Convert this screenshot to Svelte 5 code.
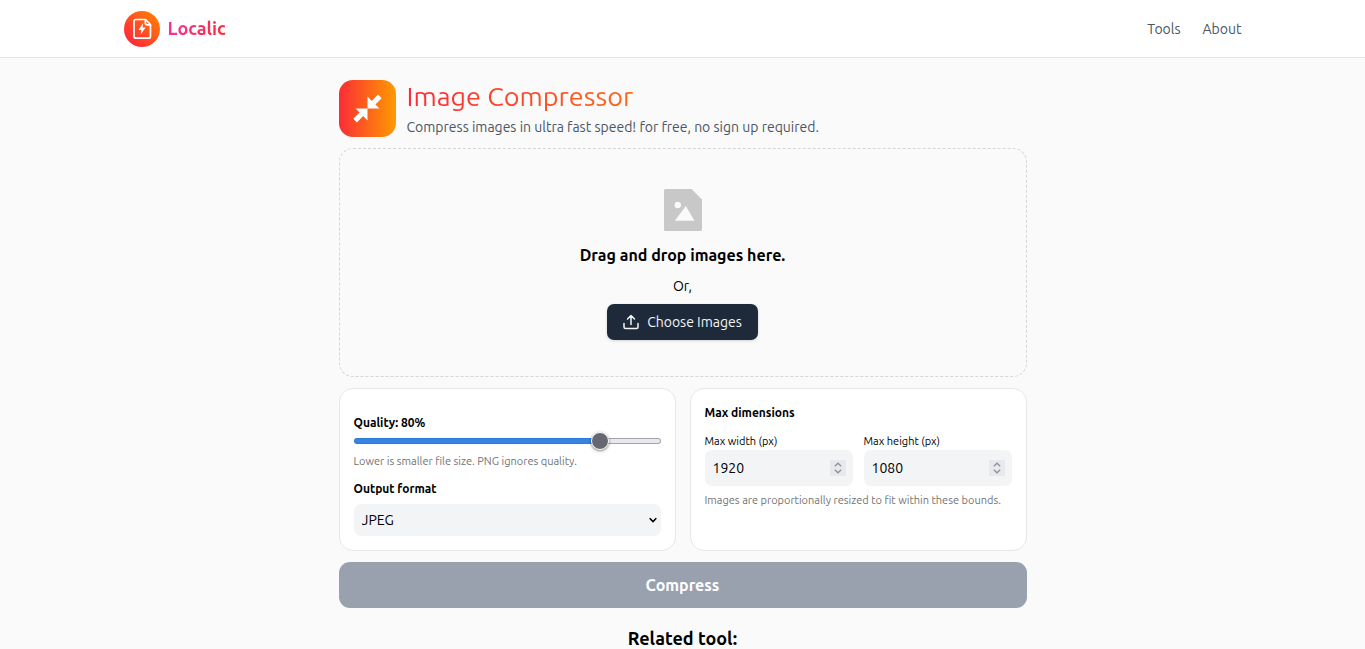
<script>
  const minQuality = 10;
  const maxQuality = 95;

  let quality = $state(80);
  let format = $state('JPEG');
  let maxWidth = $state(1920);
  let maxHeight = $state(1080);
  let fill = $derived(((quality - minQuality) / (maxQuality - minQuality)) * 100);
</script>

{#snippet stepper(name, change)}
  <span class="stepper">
    <button type="button" aria-label={`Increase ${name}`} onclick={() => change(1)}>
      <svg viewBox="0 0 16 8"><path d="M4.8 6.3 8 3.2l3.2 3.1" /></svg>
    </button>
    <button type="button" aria-label={`Decrease ${name}`} onclick={() => change(-1)}>
      <svg viewBox="0 0 16 8"><path d="M4.8 1.7 8 4.8l3.2-3.1" /></svg>
    </button>
  </span>
{/snippet}

<header class="topbar">
  <div class="topbar-inner">
    <a class="brand" href="/">
      <svg class="logo" viewBox="0 0 36 36" aria-hidden="true">
        <defs>
          <linearGradient id="logo-fill" x1="0" y1="1" x2="1" y2="0">
            <stop offset="0" stop-color="#ff1744" />
            <stop offset="1" stop-color="#ff8a00" />
          </linearGradient>
        </defs>
        <circle cx="18" cy="18" r="18" fill="url(#logo-fill)" />
        <path
          d="M12 8.500h9.500l5 5V25.200a2 2 0 0 1-2 2H12a2 2 0 0 1-2-2V10.500a2 2 0 0 1 2-2ZM21.300 8.700v3.100a2 2 0 0 0 2 2h3"
          fill="none" stroke="#fff" stroke-width="1.700" stroke-linejoin="round" />
        <path d="M19.100 11.900 14.600 18.900h2.700l-.6 4.700 4.900-7h-3Z" fill="#fff" />
      </svg>
      <span>Localic</span>
    </a>
    <nav>
      <a href="/tools">Tools</a>
      <a href="/about">About</a>
    </nav>
  </div>
</header>

<main>
  <section class="intro">
    <svg class="tool-icon" viewBox="0 0 57 57" aria-hidden="true">
      <defs>
        <linearGradient id="tool-fill">
          <stop offset="0" stop-color="#fb2c36" />
          <stop offset="1" stop-color="#fe9a00" />
        </linearGradient>
      </defs>
      <rect width="57" height="57" rx="14" fill="url(#tool-fill)" />
      <path
        d="M28.500 16.600v11.900h11.900l-4-4 6.300-6.300-3.600-3.600-6.300 6.300ZM28.500 40.400V28.500H16.600l4 4-6.300 6.300 3.600 3.600 6.300-6.300Z"
        fill="#fff" />
    </svg>
    <div class="intro-text">
      <h1>Image Compressor</h1>
      <p>Compress images in ultra fast speed! for free, no sign up required.</p>
    </div>
  </section>

  <section class="dropzone">
    <svg class="file-icon" viewBox="0 0 38 42" aria-hidden="true">
      <path
        d="M1.500 0H27.500L38 10.500V40.500A1.500 1.500 0 0 1 36.500 42H1.500A1.500 1.500 0 0 1 0 40.500V1.500A1.500 1.500 0 0 1 1.500 0ZM13.800 12.700a3.200 3.200 0 1 0 0 6.400 3.200 3.200 0 0 0 0-6.400ZM21.800 17 10.800 31.700H30.500Z"
        fill="#c8c8c8" fill-rule="evenodd" />
    </svg>
    <h2>Drag and drop images here.</h2>
    <p>Or,</p>
    <button class="choose" type="button">
      <svg viewBox="0 0 16 16" aria-hidden="true">
        <path d="M8 10.500V1.500M4.500 5 8 1.500 11.500 5M1 9.500v3.500a1.500 1.500 0 0 0 1.500 1.500h11a1.500 1.500 0 0 0 1.500-1.500V9.500" />
      </svg>
      Choose Images
    </button>
  </section>

  <div class="settings">
    <section class="card output">
      <label class="title" for="quality">Quality: {quality}%</label>
      <input
        id="quality" type="range" min={minQuality} max={maxQuality}
        bind:value={quality} style:--fill={`${fill}%`} />
      <p class="hint">Lower is smaller file size. PNG ignores quality.</p>
      <label class="title format-title" for="format">Output format</label>
      <div class="select">
        <select id="format" bind:value={format}>
          <option>JPEG</option>
          <option>PNG</option>
          <option>WEBP</option>
        </select>
        <svg viewBox="0 0 10 10" aria-hidden="true"><path d="M1.700 3.300 5 6.600l3.300-3.300" /></svg>
      </div>
    </section>

    <section class="card">
      <h3 class="title">Max dimensions</h3>
      <div class="fields">
        <div class="field">
          <label for="max-width">Max width (px)</label>
          <div class="number">
            <input id="max-width" type="number" bind:value={maxWidth} />
            {@render stepper('max width', (n) => (maxWidth += n))}
          </div>
        </div>
        <div class="field">
          <label for="max-height">Max height (px)</label>
          <div class="number">
            <input id="max-height" type="number" bind:value={maxHeight} />
            {@render stepper('max height', (n) => (maxHeight += n))}
          </div>
        </div>
      </div>
      <p class="hint">Images are proportionally resized to fit within these bounds.</p>
    </section>
  </div>

  <button class="compress" type="button">Compress</button>

  <h2 class="related">Related tool:</h2>
</main>

<style>
  :global(body) {
    margin: 0;
    background: #fafafa;
    color: #000;
    font: 14px/20px Ubuntu, 'Noto Sans', sans-serif;
    overflow-x: hidden;
  }
  :global(html) {
    scrollbar-width: none;
  }
  * {
    box-sizing: border-box;
  }
  h1, h2, h3, p {
    margin: 0;
  }
  button, input, select {
    font: inherit;
    border: 0;
    margin: 0;
  }
  a {
    text-decoration: none;
  }
  svg {
    display: block;
    flex: none;
  }

  .topbar {
    background: #fff;
    border-bottom: 1px solid #e5e5e8;
  }
  .topbar-inner {
    max-width: 1150px;
    margin: 0 auto;
    padding: 11px 16px 10px;
    display: flex;
    align-items: center;
    justify-content: space-between;
  }
  .brand {
    display: flex;
    align-items: center;
    gap: 8px;
    font-size: 18px;
    line-height: 22px;
    font-weight: 700;
  }
  .brand span {
    padding-bottom: 2px;
    background: linear-gradient(90deg, #f6339a, #fb2c36);
    background-clip: text;
    color: transparent;
  }
  .logo {
    width: 36px;
    height: 36px;
  }
  nav {
    display: flex;
    gap: 22px;
  }
  nav a {
    color: #4a5565;
  }

  main {
    max-width: 688px;
    margin: 0 auto;
    padding: 22px 0;
    display: flex;
    flex-direction: column;
    gap: 11px;
  }
  .intro {
    display: flex;
    gap: 11px;
  }
  .tool-icon {
    width: 57px;
    height: 57px;
  }
  h1 {
    font-size: 27px;
    line-height: 32px;
    font-weight: 400;
    background: linear-gradient(90deg, #fb2c36, #fe9a00);
    background-clip: text;
    color: transparent;
  }
  .intro p {
    margin-top: 5px;
    color: #4a5565;
  }

  .dropzone {
    border: 1px dashed #d1d5dc;
    border-radius: 14px;
    padding: 40px 16px 36px;
    display: flex;
    flex-direction: column;
    align-items: center;
  }
  .file-icon {
    width: 38px;
    height: 42px;
    margin-bottom: 12px;
  }
  .dropzone h2 {
    font-size: 16px;
    line-height: 24px;
    font-weight: 700;
  }
  .dropzone p {
    margin: 9px 0 8px;
  }
  .choose {
    display: flex;
    align-items: center;
    gap: 8px;
    padding: 8px 16px;
    border-radius: 7px;
    background: #1e2939;
    color: #f3f4f6;
    box-shadow: 0 1px 3px rgb(0 0 0 / 15%);
  }
  .choose svg {
    width: 16px;
    height: 16px;
  }
  .choose path {
    fill: none;
    stroke: currentColor;
    stroke-width: 1.500;
    stroke-linecap: round;
    stroke-linejoin: round;
  }

  .settings {
    display: grid;
    grid-template-columns: 1fr 1fr;
    gap: 14px;
  }
  .card {
    background: #fff;
    border: 1px solid #e5e7eb;
    border-radius: 14px;
    padding: 15px 14px 14px;
  }
  .title {
    display: block;
    font-size: 12px;
    line-height: 18px;
    font-weight: 700;
  }
  .hint {
    color: #737373;
    font-size: 11px;
    line-height: 14px;
  }
  .output {
    padding-top: 25px;
  }
  .format-title {
    margin: 12px 0 6px;
  }

  input[type='range'] {
    appearance: none;
    display: block;
    width: 100%;
    height: 18px;
    margin: 0 0 4px;
    background: none;
  }
  input[type='range']::-webkit-slider-runnable-track {
    height: 6px;
    border: 1px solid transparent;
    border-radius: 3px;
    background:
      linear-gradient(90deg, #3584e4 var(--fill), #e9e9ed var(--fill)) padding-box,
      linear-gradient(90deg, #2f7bd8 var(--fill), #a3a3ae var(--fill)) border-box;
  }
  input[type='range']::-webkit-slider-thumb {
    appearance: none;
    width: 18px;
    height: 18px;
    margin-top: -7px;
    border: 1px solid #fff;
    border-radius: 50%;
    background: #676774;
    box-shadow: 0 1px 3px rgb(0 0 0 / 50%);
  }

  .select, .number {
    position: relative;
  }
  select {
    appearance: none;
    display: block;
    width: 100%;
    height: 32px;
    padding: 0 24px 0 8px;
    border-radius: 7px;
    background: #f3f4f6;
    color: #000;
  }
  .select svg {
    position: absolute;
    right: 3px;
    top: 11px;
    width: 10px;
    height: 10px;
    fill: none;
    stroke: #000;
    stroke-width: 1.600;
    pointer-events: none;
  }

  .fields {
    display: grid;
    grid-template-columns: 1fr 1fr;
    gap: 11px;
    margin: 11px 0 7px;
  }
  .field label {
    display: block;
    font-size: 11px;
    line-height: 16px;
    margin-bottom: 1px;
  }
  .number input {
    appearance: textfield;
    display: block;
    width: 100%;
    height: 36px;
    padding: 0 24px 0 8px;
    border-radius: 7px;
    background: #f3f4f6;
    color: #000;
  }
  .number input::-webkit-inner-spin-button {
    appearance: none;
  }
  .stepper {
    position: absolute;
    right: 7px;
    top: 10px;
    width: 16px;
    background: #e9e9ed;
  }
  .stepper button {
    display: block;
    width: 16px;
    height: 8px;
    padding: 0;
    background: none;
  }
  .stepper path {
    fill: none;
    stroke: #8f8f9d;
    stroke-width: 1.300;
  }

  .compress {
    height: 46px;
    border-radius: 11px;
    background: #99a1af;
    color: #fff;
    font-size: 16px;
    font-weight: 700;
  }
  .related {
    margin-top: 7px;
    text-align: center;
    font-size: 18px;
    line-height: 24px;
    font-weight: 700;
  }
</style>
